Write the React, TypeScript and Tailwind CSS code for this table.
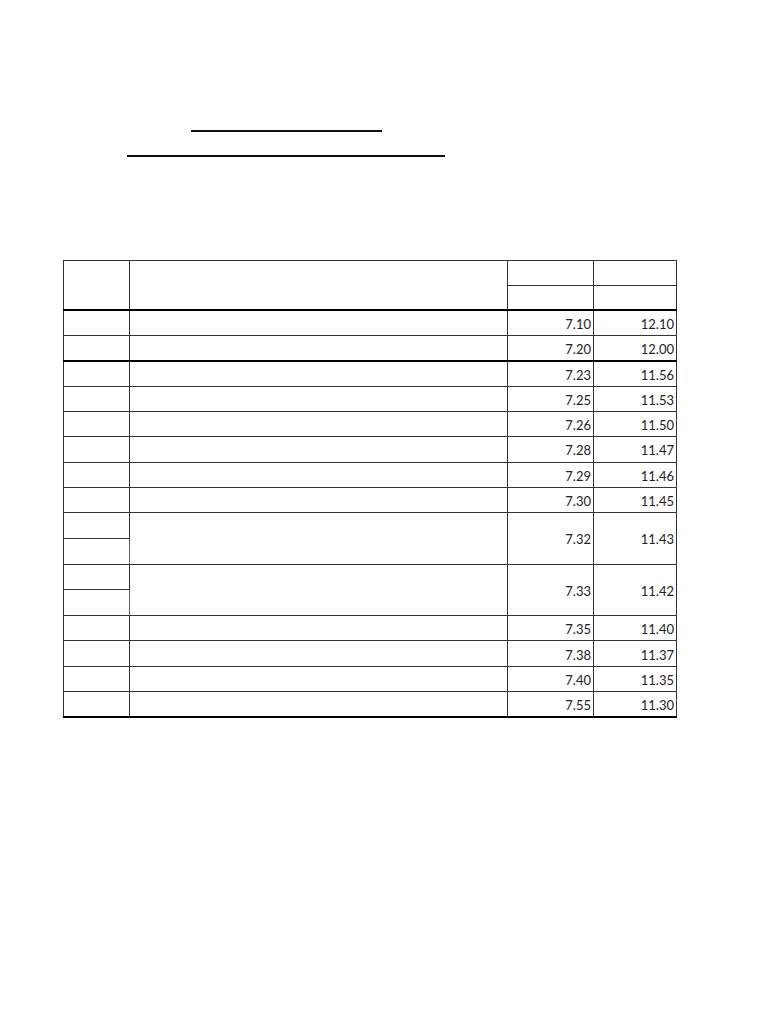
import * as React from "react";

type Row = { a: string; b: string; split?: boolean; thick?: boolean };

const rows: Row[] = [
  { a: "7.10", b: "12.10" },
  { a: "7.20", b: "12.00", thick: true },
  { a: "7.23", b: "11.56" },
  { a: "7.25", b: "11.53" },
  { a: "7.26", b: "11.50" },
  { a: "7.28", b: "11.47" },
  { a: "7.29", b: "11.46" },
  { a: "7.30", b: "11.45" },
  { a: "7.32", b: "11.43", split: true },
  { a: "7.33", b: "11.42", split: true },
  { a: "7.35", b: "11.40" },
  { a: "7.38", b: "11.37" },
  { a: "7.40", b: "11.35" },
  { a: "7.55", b: "11.30" },
];

const cell = "border border-[#333] p-0";
const num = "border border-[#333] px-[2px] pt-[3px] pb-0 text-right align-middle";

export default function App() {
  return (
    <div
      className="w-[768px] h-[1024px] bg-white text-[#222]"
      style={{ fontFamily: "Lato, 'Open Sans', sans-serif" }}
    >
      <div className="pt-[130px]">
        <div className="ml-[191px] w-[191px] h-[2px] bg-[#111]" />
        <div className="ml-[127px] mt-[23px] w-[318px] h-[2px] bg-[#111]" />
      </div>

      <table className="ml-[63px] mt-[103px] w-[613px] table-fixed border-collapse text-[13px] leading-none">
        <colgroup>
          <col className="w-[66px]" />
          <col className="w-[378px]" />
          <col className="w-[86px]" />
          <col className="w-[83px]" />
        </colgroup>
        <tbody>
          <tr className="h-[24.5px]">
            <td rowSpan={2} className={`${cell} border-b-2 border-b-black`} />
            <td rowSpan={2} className={`${cell} border-l-[#666] border-b-2 border-b-black`} />
            <td className={cell} />
            <td className={cell} />
          </tr>
          <tr className="h-[25px]">
            <td className={`${cell} border-b-2 border-b-black`} />
            <td className={`${cell} border-b-2 border-b-black`} />
          </tr>
          {rows.map((r, i) => {
            const last = i === rows.length - 1;
            const bottom = r.thick || last ? "border-b-2 border-b-black" : "";
            if (r.split) {
              return (
                <React.Fragment key={r.a}>
                  <tr className="h-[25.7px]">
                    <td className={cell} />
                    <td rowSpan={2} className={`${cell} border-l-[#666]`} />
                    <td rowSpan={2} className={num}>
                      {r.a}
                    </td>
                    <td rowSpan={2} className={num}>
                      {r.b}
                    </td>
                  </tr>
                  <tr className="h-[25.7px]">
                    <td className={cell} />
                  </tr>
                </React.Fragment>
              );
            }
            return (
              <tr key={r.a} className="h-[25.35px]">
                <td className={`${cell} ${bottom}`} />
                <td className={`${cell} border-l-[#666] ${bottom}`} />
                <td className={`${num} ${bottom}`}>{r.a}</td>
                <td className={`${num} ${bottom}`}>{r.b}</td>
              </tr>
            );
          })}
        </tbody>
      </table>
    </div>
  );
}
